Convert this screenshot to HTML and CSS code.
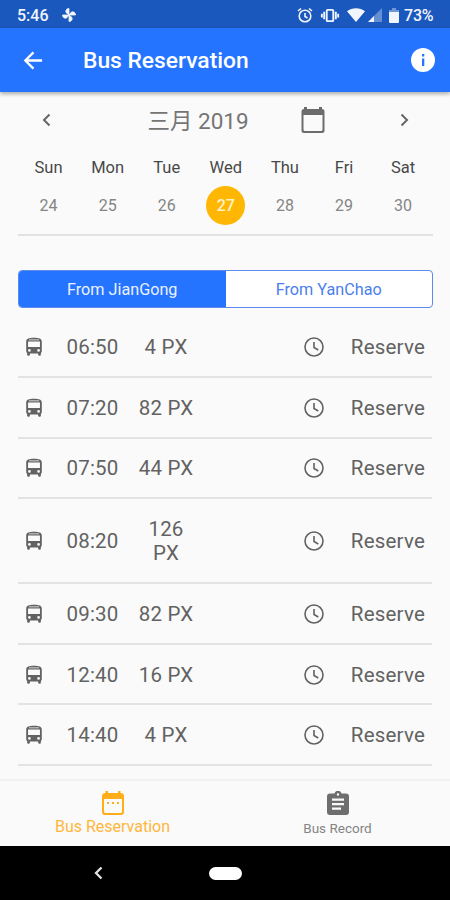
FILE: index.html
```html
<!DOCTYPE html>
<html lang="en">
<head>
<meta charset="utf-8">
<title>Bus Reservation</title>
<link rel="stylesheet" href="styles.css">
</head>
<body>
<svg class="defs" aria-hidden="true">
  <symbol id="bus" viewBox="0 0 24 24"><path fill-rule="evenodd" d="M3.500 16.500V6c0-3 3-4 8.500-4s8.500 1 8.500 4v10.500c0 .9-.4 1.600-1 2V20.500c0 .5-.5 1-1 1h-1c-.5 0-1-.5-1-1V19h-9v1.500c0 .5-.5 1-1 1h-1c-.5 0-1-.5-1-1v-2c-.6-.4-1-1.100-1-2zM5.500 6v6h13V6zM6.500 4.600h11V3.800h-11zM7 14.200a1.500 1.500 0 1 0 0 3 1.500 1.500 0 0 0 0-3zM17 14.200a1.500 1.500 0 1 0 0 3 1.500 1.500 0 0 0 0-3z"/></symbol>
  <symbol id="clock" viewBox="0 0 24 24"><g fill="none" stroke="currentColor" stroke-width="1.600"><circle cx="12" cy="12" r="9"/><path d="M12 7v5.500l4.300 2.500"/></g></symbol>
</svg>
<div class="screen">
  <div class="status">
    <span class="time">5:46</span>
    <svg class="pinwheel" viewBox="0 0 16 16"><path d="M8 8V1.500C5.500 1.500 4.300 3.500 5 5.500zM8 8h6.500c0-2.500-2-3.700-4-3zM8 8v6.500c2.500 0 3.700-2 3-4zM8 8H1.500c0 2.500 2 3.700 4 3z" stroke="currentColor" stroke-width=".8"/></svg>
    <svg class="alarm" viewBox="0 0 16 16"><g fill="none" stroke="currentColor" stroke-width="1.600"><circle cx="8" cy="9" r="5.800"/><path d="M1 4l3-2.500M15 4l-3-2.500M8 6v3.500l2.500 1.500"/></g></svg>
    <svg class="vibrate" viewBox="0 0 20 16"><g fill="none" stroke="currentColor" stroke-width="2"><rect x="6.500" y="2" width="7" height="12" rx="1"/><path d="M3.800 4v8M16.200 4v8M1.300 6v4M18.700 6v4"/></g></svg>
    <svg class="wifi" viewBox="0 0 18 14"><path d="M0 3.300C5-.9 13-.9 18 3.300L9 14z"/></svg>
    <svg class="signal" viewBox="0 0 14 14"><path opacity=".35" d="M14 0v14H0z"/><path d="M6 8v6H0z"/></svg>
    <svg class="battery" viewBox="0 0 10 15"><path opacity=".4" d="M3 0h4v2h3v3H0V2h3z"/><path d="M0 4h10v10q0 1-1 1H1q-1 0-1-1z"/></svg>
    <span class="percent">73%</span>
  </div>
  <header class="appbar">
    <svg class="back" viewBox="0 0 24 24"><path d="M21.500 12H4M12.500 3.500L4 12l8.500 8.500" fill="none" stroke="currentColor" stroke-width="2.400"/></svg>
    <h1>Bus Reservation</h1>
    <svg class="info" viewBox="0 0 24 24"><path fill-rule="evenodd" d="M12 0a12 12 0 1 0 0 24 12 12 0 0 0 0-24zM11 6h2.300v2.400H11zM11 10.500h2.300V18H11z"/></svg>
  </header>
  <main>
    <div class="month">
      <svg class="chev" viewBox="0 0 12 16"><path d="M9.500 2.500L4 8l5.500 5.500"/></svg>
      <span class="label">三月 2019</span>
      <svg class="cal" viewBox="0 0 24 26"><path fill-rule="evenodd" d="M3 2V0h3v2h12V0h3v2q2.500 0 2.500 2.500V23.500Q23.500 26 21 26H3Q.5 26 .5 23.500V4.500Q.5 2 3 2zM2.500 8v14.500q0 1.500 1.500 1.500h16q1.500 0 1.500-1.500V8z"/></svg>
      <svg class="chev" viewBox="0 0 12 16"><path d="M2.500 2.500L8 8l-5.500 5.500"/></svg>
    </div>
    <div class="week">
      <div><b>Sun</b><i>24</i></div><div><b>Mon</b><i>25</i></div><div><b>Tue</b><i>26</i></div><div><b>Wed</b><i class="on">27</i></div><div><b>Thu</b><i>28</i></div><div><b>Fri</b><i>29</i></div><div><b>Sat</b><i>30</i></div>
    </div>
    <div class="segment"><span class="active">From JianGong</span><span>From YanChao</span></div>
    <div class="list">
      <div class="row"><svg class="bus"><use href="#bus"/></svg><span>06:50</span><span class="px">4 PX</span><svg class="clock"><use href="#clock"/></svg><span class="res">Reserve</span></div>
      <div class="row"><svg class="bus"><use href="#bus"/></svg><span>07:20</span><span class="px">82 PX</span><svg class="clock"><use href="#clock"/></svg><span class="res">Reserve</span></div>
      <div class="row"><svg class="bus"><use href="#bus"/></svg><span>07:50</span><span class="px">44 PX</span><svg class="clock"><use href="#clock"/></svg><span class="res">Reserve</span></div>
      <div class="row tall"><svg class="bus"><use href="#bus"/></svg><span>08:20</span><span class="px">126 PX</span><svg class="clock"><use href="#clock"/></svg><span class="res">Reserve</span></div>
      <div class="row"><svg class="bus"><use href="#bus"/></svg><span>09:30</span><span class="px">82 PX</span><svg class="clock"><use href="#clock"/></svg><span class="res">Reserve</span></div>
      <div class="row"><svg class="bus"><use href="#bus"/></svg><span>12:40</span><span class="px">16 PX</span><svg class="clock"><use href="#clock"/></svg><span class="res">Reserve</span></div>
      <div class="row"><svg class="bus"><use href="#bus"/></svg><span>14:40</span><span class="px">4 PX</span><svg class="clock"><use href="#clock"/></svg><span class="res">Reserve</span></div>
    </div>
  </main>
  <nav class="tabs">
    <div class="tab selected">
      <svg viewBox="0 0 22 24"><path fill-rule="evenodd" d="M3.500 2V0H6v2h10V0h2.500v2Q22 2 22 5v16q0 3-3 3H3q-3 0-3-3V5q0-3 3.500-3zM2 8v12.500Q2 22 3.500 22h15q1.500 0 1.500-1.500V8zM5 11h2v2H5zM10 11h2v2h-2zM15 11h2v2h-2z"/></svg>
      <span>Bus Reservation</span>
    </div>
    <div class="tab">
      <svg viewBox="0 0 22 24"><path fill-rule="evenodd" d="M7.500 2.500a3.600 3.600 0 0 1 7 0H19q3 0 3 3V21q0 3-3 3H3q-3 0-3-3V5.500q0-3 3-3zM11 2.300a1.200 1.200 0 1 0 0 2.400 1.200 1.200 0 0 0 0-2.400zM5 7.500v2.200h12V7.500zM5 12v2.200h12V12zM5 16.500v2.200h9v-2.200z"/></svg>
      <span>Bus Record</span>
    </div>
  </nav>
  <div class="system">
    <svg class="sysback" viewBox="0 0 10 14"><path d="M8.500 1.500L3 7l5.500 5.500" fill="none" stroke="currentColor" stroke-width="2.300"/></svg>
    <span class="pill"></span>
  </div>
</div>
</body>
</html>
```
FILE: styles.css
```css
* { box-sizing: border-box; }
body { margin: 0; font-family: Roboto, "Noto Sans CJK TC", sans-serif; background: #fafafa; }
svg { display: block; flex: none; fill: currentColor; }
.defs { display: none; }
.screen { width: 450px; height: 900px; display: flex; flex-direction: column; overflow: hidden; }
.status { height: 28px; flex: none; background: #1b58bd; color: #f1f5fd; display: flex; align-items: center; padding: 2px 15px 0 17px; font-size: 16px; font-weight: 500; }
.time { width: 44px; }
.pinwheel { width: 16px; height: 16px; }
.alarm { width: 16px; height: 16px; margin-left: auto; }
.vibrate { width: 20px; height: 15px; margin-left: 7px; }
.wifi { width: 18px; height: 14px; margin-left: 7px; }
.signal { width: 14px; height: 14px; margin-left: 3px; }
.battery { width: 10px; height: 15px; margin-left: 7px; }
.percent { margin-left: 5px; width: 31px; letter-spacing: -.2px; }
.appbar { height: 64px; flex: none; background: #2574ff; color: #fff; display: flex; align-items: center; padding: 0 15px 0 21px; box-shadow: 0 2px 4px rgba(0,0,0,.32); position: relative; }
.back { width: 24px; height: 23px; }
.appbar h1 { margin: 0 0 0 38px; font-size: 22.800px; font-weight: 500; white-space: nowrap; }
.info { width: 24px; height: 24px; margin-left: auto; }
main { flex: 1; padding: 0 17px 0 18px; min-height: 0; }
.month { height: 56px; display: grid; grid-template-columns: 56px 248px 1fr 56px; align-items: center; justify-items: center; color: #757575; }
.month .label { font-size: 22.500px; font-weight: 400; line-height: 30px; padding-top: 2px; }
.month .cal { width: 24px; height: 26px; justify-self: start; margin-left: -21px; color: #6c6c6c; }
.chev { width: 12px; height: 16px; fill: none; stroke: #666; stroke-width: 2; }
.week { display: grid; grid-template-columns: repeat(7, 59.100px); padding-left: 1px; height: 88px; border-bottom: 2px solid #e2e2e2; }
.week div { display: flex; flex-direction: column; align-items: center; }
.week b { font-size: 16.500px; font-weight: 400; color: #484848; line-height: 20px; margin-top: 10px; }
.week i { font-size: 16px; font-style: normal; color: #858585; width: 39px; height: 39px; line-height: 40px; border-radius: 50%; text-align: center; margin-top: 8px; }
.week .on { background: #ffb703; color: #fff3cc; font-weight: 500; }
.segment { height: 38px; margin-top: 34px; display: flex; border: 1px solid #5c8af0; border-radius: 4px; overflow: hidden; background: #fff; color: #4c80ed; font-size: 16.200px; }
.segment span { flex: 1; display: flex; align-items: center; justify-content: center; }
.segment .active { background: #2574ff; color: #eaf1ff; }
.list { padding-top: 9px; margin-right: 1px; }
.row { height: 60.800px; border-bottom: 2px solid #e3e3e3; display: grid; grid-template-columns: 31px 87px 60px 1fr 106px; align-items: center; justify-items: center; font-size: 20.500px; line-height: 24px; color: #626262; letter-spacing: .2px; padding-top: 1px; }
.row.tall { height: 84.500px; }
.row .px { text-align: center; }
.bus { width: 22px; height: 22px; }
.clock { width: 24px; height: 24px; justify-self: end; }
.res { justify-self: end; margin-right: 7px; }
.tabs { height: 67px; flex: none; display: flex; background: #fafafa; border-top: 2px solid #f1f1f1; }
.tab { flex: 1; display: flex; flex-direction: column; align-items: center; padding-top: 10px; color: #6e6e6e; }
.tab svg { width: 22px; height: 24px; }
.tab span { font-size: 13.500px; line-height: 18px; margin-top: 4px; color: #858585; }
.tab.selected { color: #ffae19; }
.tab.selected span { color: #ffb63c; font-size: 16px; margin-top: 3px; }
.system { height: 54px; flex: none; background: #000; color: #e4e4e4; display: grid; grid-template-columns: 196px 59px 1fr; align-items: center; justify-items: center; }
.sysback { width: 10px; height: 14px; }
.pill { width: 33px; height: 13px; border-radius: 7px; background: #fff; }
```
